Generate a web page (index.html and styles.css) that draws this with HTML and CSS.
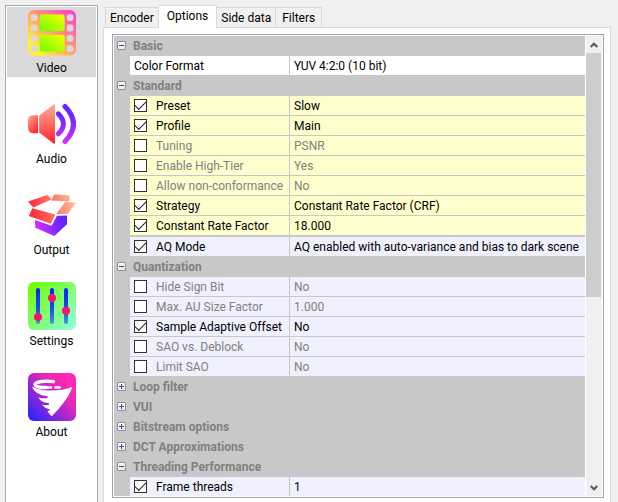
FILE: index.html
```html
<!DOCTYPE html>
<html lang="en">
<head>
<meta charset="utf-8">
<title>Encoder settings</title>
<link rel="stylesheet" href="styles.css">
</head>
<body>
<nav class="sidebar" aria-label="Sections">
  <button class="nav-item selected">
    <svg class="nav-icon" viewBox="0 0 48 48" aria-hidden="true">
      <defs>
        <linearGradient id="film" x1="0" y1="1" x2="1" y2="0"><stop offset=".15" stop-color="#fff42a"/><stop offset=".5" stop-color="#ffa16d"/><stop offset="1" stop-color="#ff32dc"/></linearGradient>
        <linearGradient id="frame" x1="0" y1="1" x2="1" y2="0"><stop offset="0" stop-color="#68ff00"/><stop offset="1" stop-color="#fbff00"/></linearGradient>
      </defs>
      <rect y="1" width="48" height="45.500" rx="6" fill="url(#film)"/>
      <g fill="#d9d9d9">
        <rect x="2.700" y="5.300" width="6.800" height="6.800" rx="2.400"/><rect x="2.700" y="15.600" width="6.800" height="6.800" rx="2.400"/><rect x="2.700" y="26" width="6.800" height="6.800" rx="2.400"/><rect x="2.700" y="36.200" width="6.800" height="6.800" rx="2.400"/>
        <rect x="38.700" y="5.300" width="6.800" height="6.800" rx="2.400"/><rect x="38.700" y="15.600" width="6.800" height="6.800" rx="2.400"/><rect x="38.700" y="26" width="6.800" height="6.800" rx="2.400"/><rect x="38.700" y="36.200" width="6.800" height="6.800" rx="2.400"/>
      </g>
      <rect x="11.700" y="5.500" width="25" height="16.800" rx="2.500" fill="url(#frame)"/>
      <rect x="11.700" y="25.800" width="25" height="16.800" rx="2.500" fill="url(#frame)"/>
    </svg>
    <span>Video</span>
  </button>
  <button class="nav-item">
    <svg class="nav-icon" viewBox="0 0 48 48" aria-hidden="true">
      <defs>
        <linearGradient id="horn" gradientUnits="userSpaceOnUse" x1="14" y1="4" x2="20" y2="43"><stop offset="0" stop-color="#ffb795"/><stop offset="1" stop-color="#ff2334"/></linearGradient>
        <linearGradient id="back" x1="0" y1="0" x2=".7" y2="1"><stop offset="0" stop-color="#ffad90"/><stop offset="1" stop-color="#ff2a38"/></linearGradient>
        <linearGradient id="wave" gradientUnits="userSpaceOnUse" x1="36" y1="4" x2="36" y2="44"><stop offset="0" stop-color="#5a26ff"/><stop offset=".4" stop-color="#7a28ff"/><stop offset="1" stop-color="#d930ff"/></linearGradient>
      </defs>
      <path d="M10 15.200v18H5Q0 33 0 28v-8Q0 15.500 5 15.200z" fill="url(#back)"/>
      <path d="M11.200 15.500 25.500 4.600Q27 4 27 5.800v36.400q0 2-1.500 1.300L11.200 32.500z" fill="url(#horn)"/>
      <g fill="none" stroke="url(#wave)" stroke-width="5" stroke-linecap="round">
        <path d="M30.300 13.800q10.200 10.200 0 20"/>
        <path d="M37 6.500q17 17.500 0 35"/>
      </g>
    </svg>
    <span>Audio</span>
  </button>
  <button class="nav-item">
    <svg class="nav-icon" viewBox="0 0 48 48" aria-hidden="true">
      <defs>
        <linearGradient id="flap" gradientUnits="userSpaceOnUse" x1="0" y1="24" x2="46" y2="12"><stop offset=".1" stop-color="#ff2d3c"/><stop offset="1" stop-color="#ffb795"/></linearGradient>
        <linearGradient id="box" gradientUnits="userSpaceOnUse" x1="7" y1="38" x2="39" y2="30"><stop offset="0" stop-color="#d42fff"/><stop offset="1" stop-color="#5424ff"/></linearGradient>
      </defs>
      <g fill="url(#flap)">
        <path d="M0 10.500 19.500 4l4.300 4.200L5.300 16.500z"/>
        <path d="M26.300 3.200 41.800 4.500l-.6 6L23.200 9.500z"/>
        <path d="M37.300 11 48 11.800l-8.200 11L28 23.300z"/>
        <path d="M4.300 17.300 27.300 23.500l-4.600 9.300L.8 25z"/>
      </g>
      <path d="M7 29l16.500 5.700 5.500-9.900 10-.3v8.700L26.300 45 7.300 36.700z" fill="url(#box)"/>
    </svg>
    <span>Output</span>
  </button>
  <button class="nav-item">
    <svg class="nav-icon" viewBox="0 0 48 48" aria-hidden="true">
      <defs>
        <linearGradient id="lime" x1="0" y1="0" x2="1" y2="1"><stop offset=".1" stop-color="#72ff0b"/><stop offset="1" stop-color="#90ffe2"/></linearGradient>
        <linearGradient id="rail" gradientUnits="userSpaceOnUse" x1="0" y1="6" x2="0" y2="42"><stop offset="0" stop-color="#0b20ff"/><stop offset=".6" stop-color="#1650ee"/><stop offset="1" stop-color="#3aa0d4"/></linearGradient>
      </defs>
      <rect width="48" height="48" rx="6" fill="url(#lime)"/>
      <g fill="url(#rail)"><rect x="8" y="6" width="4" height="36" rx="2"/><rect x="22" y="6" width="4" height="36" rx="2"/><rect x="36" y="6" width="4" height="36" rx="2"/></g>
      <g fill="#fb126f"><circle cx="10" cy="35" r="4"/><circle cx="24" cy="16" r="4"/><circle cx="38" cy="28.700" r="4"/></g>
    </svg>
    <span>Settings</span>
  </button>
  <button class="nav-item">
    <svg class="nav-icon" viewBox="0 0 48 48" aria-hidden="true">
      <defs><linearGradient id="dusk" x1="0" y1="1" x2="1" y2="0"><stop offset="0" stop-color="#1b25ff"/><stop offset=".6" stop-color="#dc28bd"/><stop offset=".8" stop-color="#ff28b2"/></linearGradient></defs>
      <rect width="48" height="48" rx="6" fill="url(#dusk)"/>
      <path d="M25.500 8.600C18 7.500 7 8.500 7 11.500c0 2.300 6 3 11 3" fill="none" stroke="#fff" stroke-width="3.400" stroke-linecap="round"/>
      <path d="M27.500 14.500h4" stroke="#fff" stroke-width="2.600" stroke-linecap="round"/>
      <path d="M19 14.500h4" stroke="#fff" stroke-width="2.600" stroke-linecap="round"/>
      <path d="M4 13.500C12 18.500 32 19 44.300 14c-3 10-12.500 21-20.500 29.300-1.500-1.300-3-3.300-4.300-5l3-1.800c-3-.5-6.500-2-8.500-5 2 .8 5 .6 7 .2.600-.8 0-1.500-1-1.700-4.500-.3-8-2-9.500-5.500 2 .8 6 1 9 .5.700-.8 0-1.800-1-2C12.500 22.500 6 19.500 4 13.500z" fill="#fff"/>
    </svg>
    <span>About</span>
  </button>
</nav>
<main class="content">
  <div class="tabs" role="tablist">
    <button class="tab" role="tab">Encoder</button>
    <button class="tab active" role="tab" aria-selected="true">Options</button>
    <button class="tab" role="tab">Side data</button>
    <button class="tab" role="tab">Filters</button>
  </div>
  <section class="panel" role="tabpanel">
    <div class="grid-frame">
      <div class="viewport">
        <table class="props">
          <colgroup><col class="col-gutter"><col class="col-name"><col></colgroup>
          <tbody>
            <tr class="group"><td><button class="toggle" aria-label="Collapse Basic"></button></td><th colspan="2">Basic</th></tr>
            <tr class="plain"><td></td><td>Color Format</td><td>YUV 4:2:0 (10 bit)</td></tr>
            <tr class="group"><td><button class="toggle" aria-label="Collapse Standard"></button></td><th colspan="2">Standard</th></tr>
          </tbody>
          <tbody class="yellow">
            <tr><td></td><td><label><input type="checkbox" checked>Preset</label></td><td>Slow</td></tr>
            <tr><td></td><td><label><input type="checkbox" checked>Profile</label></td><td>Main</td></tr>
            <tr class="off"><td></td><td><label><input type="checkbox">Tuning</label></td><td>PSNR</td></tr>
            <tr class="off"><td></td><td><label><input type="checkbox">Enable High-Tier</label></td><td>Yes</td></tr>
            <tr class="off"><td></td><td><label><input type="checkbox">Allow non-conformance</label></td><td>No</td></tr>
            <tr><td></td><td><label><input type="checkbox" checked>Strategy</label></td><td>Constant Rate Factor (CRF)</td></tr>
            <tr class="last"><td></td><td><label><input type="checkbox" checked>Constant Rate Factor</label></td><td>18.000</td></tr>
          </tbody>
          <tbody>
            <tr><td></td><td><label><input type="checkbox" checked>AQ Mode</label></td><td>AQ enabled with auto-variance and bias to dark scene</td></tr>
            <tr class="group"><td><button class="toggle" aria-label="Collapse Quantization"></button></td><th colspan="2">Quantization</th></tr>
            <tr class="off"><td></td><td><label><input type="checkbox">Hide Sign Bit</label></td><td>No</td></tr>
            <tr class="off"><td></td><td><label><input type="checkbox">Max. AU Size Factor</label></td><td>1.000</td></tr>
            <tr><td></td><td><label><input type="checkbox" checked>Sample Adaptive Offset</label></td><td>No</td></tr>
            <tr class="off"><td></td><td><label><input type="checkbox">SAO vs. Deblock</label></td><td>No</td></tr>
            <tr class="off"><td></td><td><label><input type="checkbox">Limit SAO</label></td><td>No</td></tr>
            <tr class="group"><td><button class="toggle closed" aria-label="Expand Loop filter"></button></td><th colspan="2">Loop filter</th></tr>
            <tr class="group"><td><button class="toggle closed" aria-label="Expand VUI"></button></td><th colspan="2">VUI</th></tr>
            <tr class="group"><td><button class="toggle closed" aria-label="Expand Bitstream options"></button></td><th colspan="2">Bitstream options</th></tr>
            <tr class="group"><td><button class="toggle closed" aria-label="Expand DCT Approximations"></button></td><th colspan="2">DCT Approximations</th></tr>
            <tr class="group"><td><button class="toggle" aria-label="Collapse Threading Performance"></button></td><th colspan="2">Threading Performance</th></tr>
            <tr><td></td><td><label><input type="checkbox" checked>Frame threads</label></td><td>1</td></tr>
          </tbody>
        </table>
      </div>
      <div class="scrollbar">
        <button class="arrow" aria-label="Scroll up"><svg viewBox="0 0 8 6" aria-hidden="true"><path d="M.7 5 4 1.700 7.300 5"/></svg></button>
        <div class="track"><div class="thumb"></div></div>
        <button class="arrow" aria-label="Scroll down"><svg viewBox="0 0 8 6" aria-hidden="true"><path d="M.7 1 4 4.300 7.300 1"/></svg></button>
      </div>
    </div>
  </section>
</main>
</body>
</html>
```
FILE: styles.css
```css
* {
  box-sizing: border-box;
}

body {
  margin: 0;
  height: 100vh;
  overflow: hidden;
  display: flex;
  gap: 5px;
  padding: 5px 7px 0 5px;
  background: #f0f0f0;
  color: #000;
  font-family: Roboto, "Noto Sans", sans-serif;
  font-size: 12px;
  line-height: 16px;
}

button {
  margin: 0;
  padding: 0;
  border: 0;
  background: none;
  color: inherit;
  font: inherit;
}

.sidebar {
  flex: none;
  width: 93px;
  padding: 1px;
  display: flex;
  flex-direction: column;
  gap: 21px;
  background: #fff;
  border: 1px solid #a9a9ae;
  border-bottom: 0;
}

.nav-item {
  display: flex;
  flex-direction: column;
  align-items: center;
  gap: 3px;
  height: 70px;
  padding-top: 2px;
}

.nav-item.selected {
  background: #d9d9d9;
}

.nav-icon {
  width: 48px;
  height: 48px;
}

.content {
  flex: 1;
  min-width: 0;
  display: flex;
  flex-direction: column;
}

.tabs {
  display: flex;
  align-items: flex-end;
  padding-left: 2px;
}

.tab {
  height: 20px;
  min-width: 46px;
  padding: 0 4px;
  border: 1px solid #d9d9d9;
  border-bottom: 0;
}

.tab + .tab {
  border-left: 0;
}

.tab.active {
  height: 23px;
  margin-bottom: -1px;
  padding: 0 8px 2px;
  background: #fff;
  position: relative;
}

.panel {
  flex: 1;
  min-height: 0;
  display: flex;
  padding: 6px 6px 4px 8px;
  background: #fff;
  border: 1px solid #d9d9d9;
  border-bottom: 0;
}

.grid-frame {
  flex: 1;
  min-width: 0;
  display: flex;
  gap: 1px;
  padding: 1px;
  border: 1px solid #a3a3a9;
}

.viewport {
  flex: 1;
  min-width: 0;
  overflow: hidden;
  background: #c8c8c8;
}

.props {
  width: 100%;
  table-layout: fixed;
  border-collapse: separate;
  border-spacing: 0;
}

.col-gutter {
  width: 16px;
}

.col-name {
  width: 160px;
}

.props td,
.props th {
  height: 20px;
  padding: 0 4px;
  border-bottom: 1px solid #c8c8c8;
  background: #f0f0ff;
  text-align: left;
  vertical-align: middle;
  white-space: nowrap;
}

.props td:first-child {
  padding: 0 0 0 3px;
  background: #c8c8c8;
}

.props td:nth-child(2) {
  border-right: 1px solid #c8c8c8;
}

.props .plain td:not(:first-child) {
  background: #fff;
}

.props .yellow td:not(:first-child) {
  background: #ffffcd;
}

.props .last td {
  height: 21px;
  border-bottom-width: 2px;
}

.props .off td {
  color: #808080;
}

.props th {
  background: #c8c8c8;
  color: #808080;
  padding: 0 3px;
  font-weight: 700;
}

.props label {
  display: flex;
  align-items: center;
  gap: 9px;
}

.props input {
  appearance: none;
  flex: none;
  width: 13px;
  height: 13px;
  margin: 0;
  border: 1px solid #333;
  background: #fff;
  display: grid;
  place-items: center;
}

.props input:checked::after {
  content: "";
  width: 10px;
  height: 5px;
  border: solid #222;
  border-width: 0 0 1px 1px;
  transform: translateY(-2px) rotate(-45deg);
}

.toggle {
  display: block;
  width: 9px;
  height: 9px;
  border: 1px solid #919191;
  border-radius: 1px;
  background: linear-gradient(#2f4f9e, #2f4f9e) center / 5px 1px no-repeat, linear-gradient(135deg, #fff, #e4e4e4);
}

.toggle.closed {
  background: linear-gradient(#2f4f9e, #2f4f9e) center / 5px 1px no-repeat, linear-gradient(#2f4f9e, #2f4f9e) center / 1px 5px no-repeat, linear-gradient(135deg, #fff, #e4e4e4);
}

.scrollbar {
  flex: none;
  width: 16px;
  display: flex;
  flex-direction: column;
  background: #f0f0f0;
}

.arrow {
  height: 17px;
  display: grid;
  place-items: center;
}

.arrow svg {
  width: 8px;
  height: 6px;
  fill: none;
  stroke: #555;
  stroke-width: 2;
}

.track {
  flex: 1;
}

.thumb {
  width: 15px;
  height: 57.3%;
  background: #cdcdcd;
}
```
